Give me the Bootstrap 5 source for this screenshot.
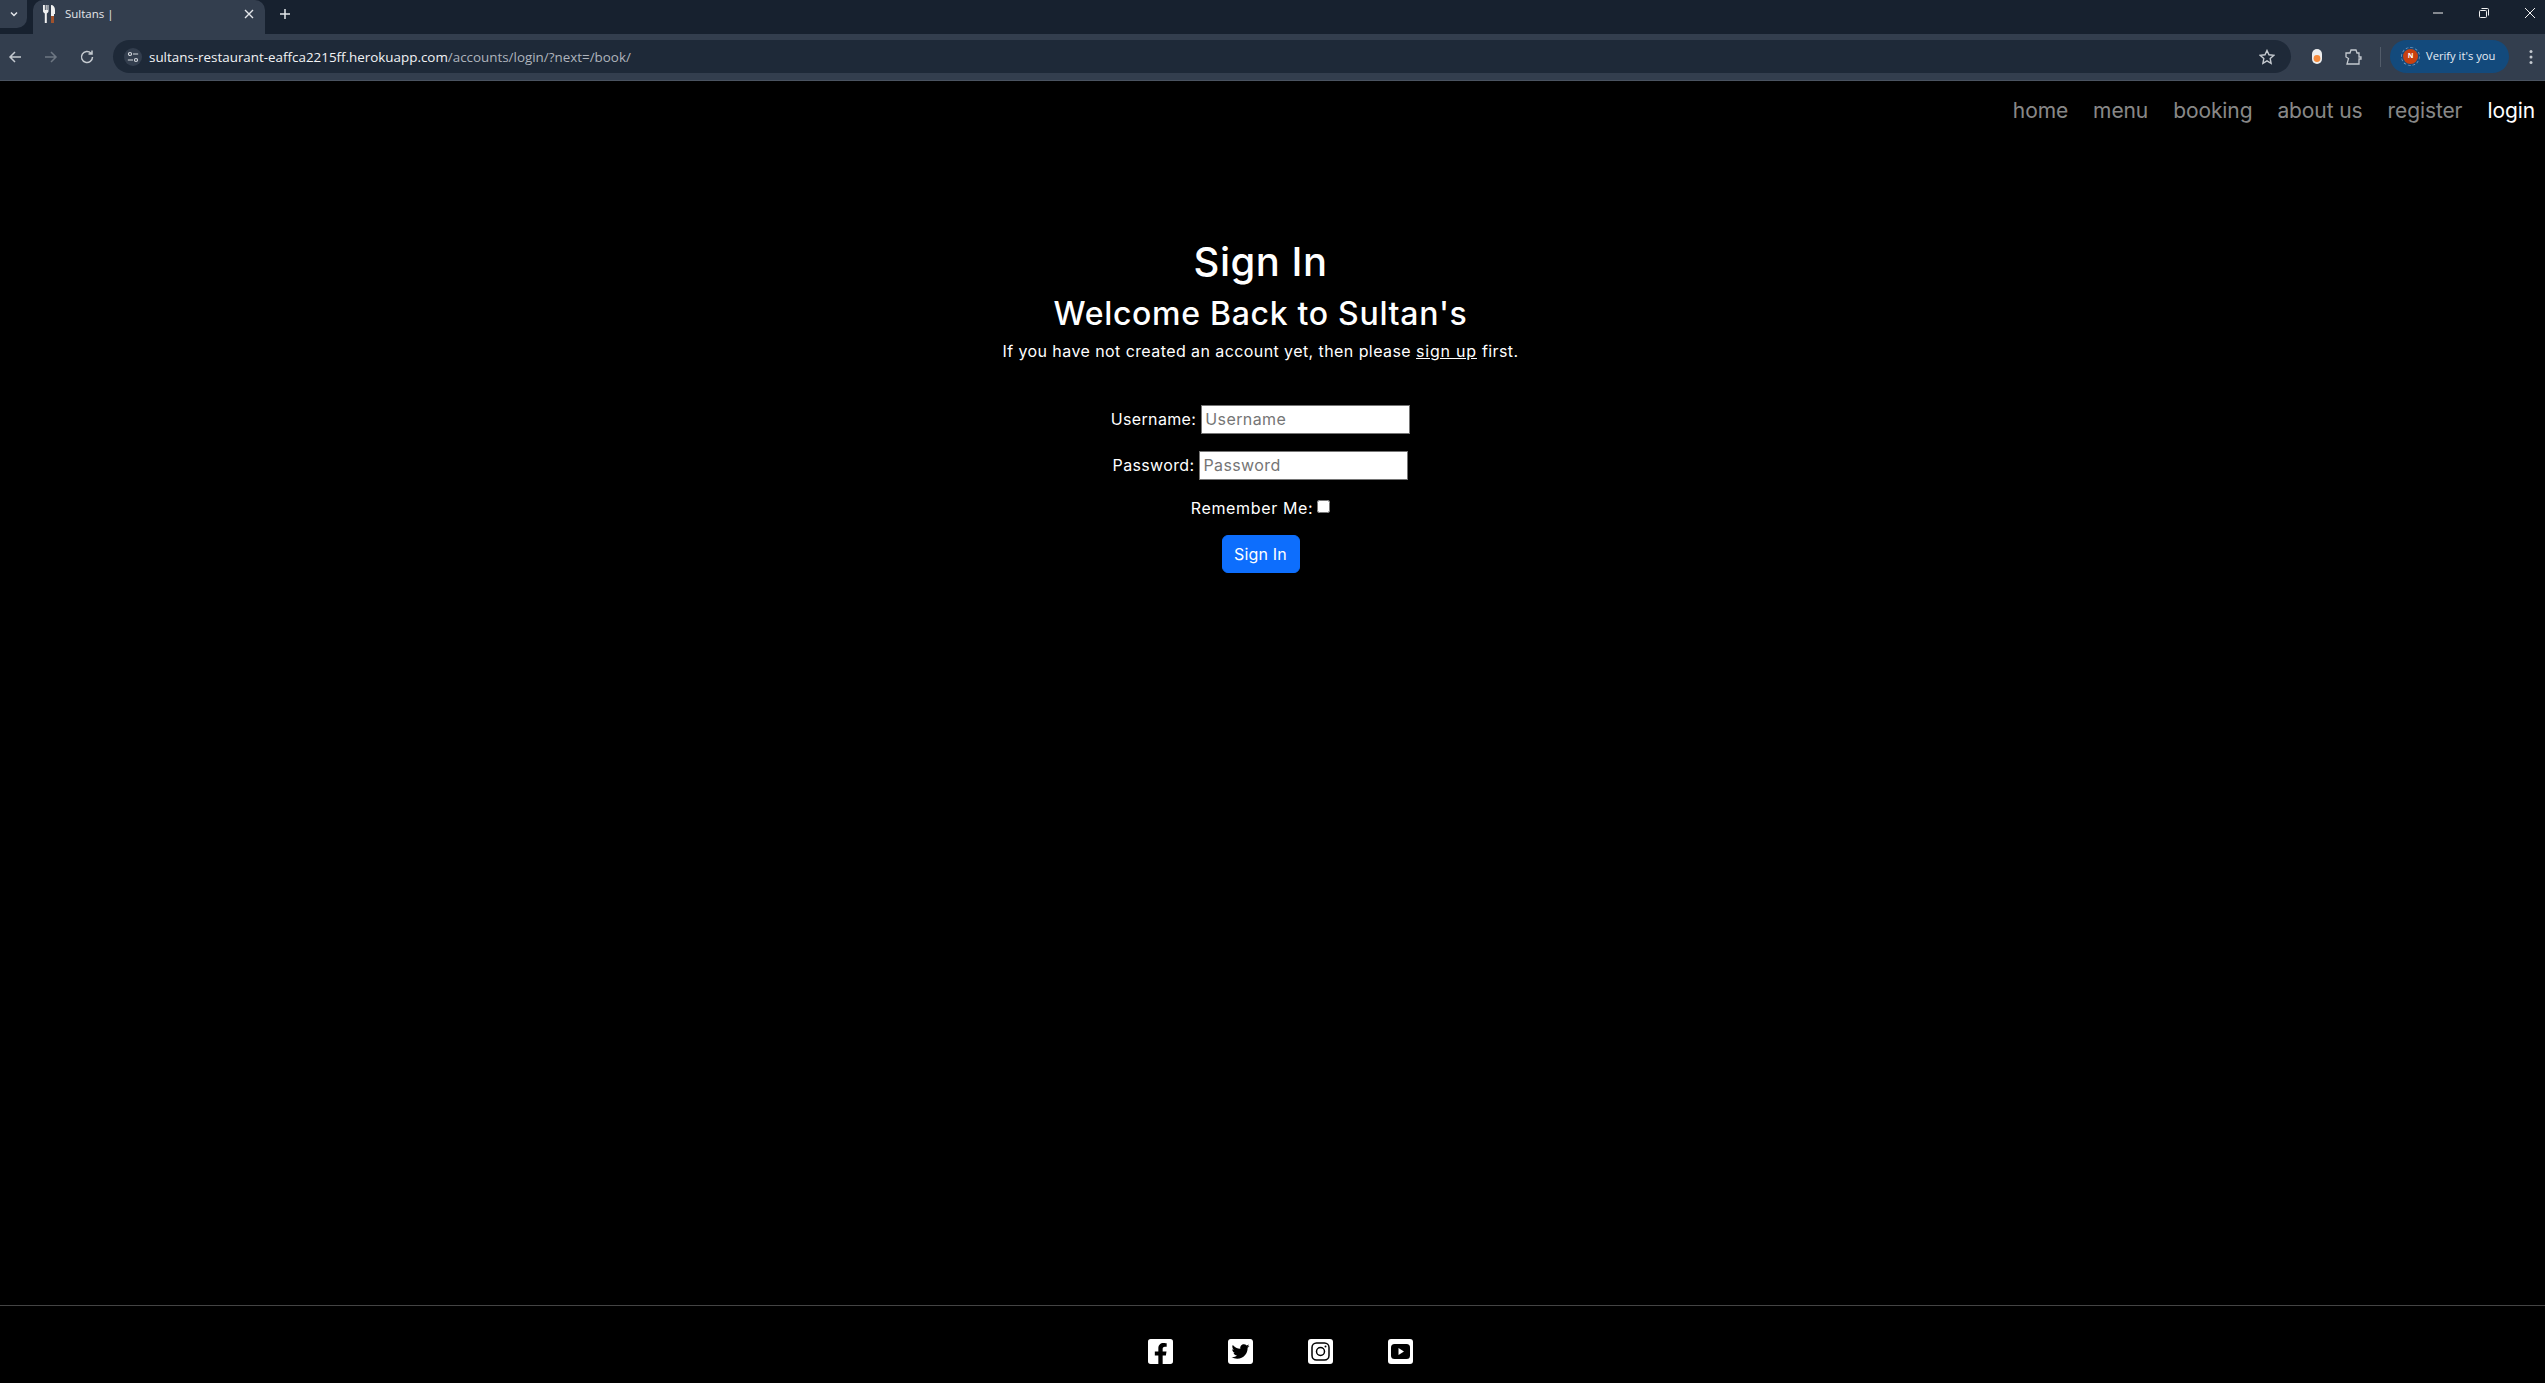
<!DOCTYPE html>
<html lang="en">
<head>
<meta charset="utf-8">
<title>Sultans |</title>
<link href="https://cdn.jsdelivr.net/npm/bootstrap@5.3.0/dist/css/bootstrap.min.css" rel="stylesheet">
<style>
html,body{height:100%;overflow:hidden}
body{background:#000;color:#fff;font-family:Inter,"Noto Sans",sans-serif;display:flex;flex-direction:column;height:1383px}
.tabstrip{height:34px;background:#17212f;color:#e3e6ea;font-family:"Open Sans","Noto Sans",sans-serif}
.tabdrop{width:27px;height:28px;background:#333e4e;border-radius:0 0 10px 0;margin-right:6px;flex-shrink:0}
.tabshape{width:232px;height:34px;background:#333e4e;border-radius:10px 10px 0 0;padding:0 11px 6px 10px;font-size:11.5px}
.tabname{margin-left:9px}
.tabplus{margin-left:14px;margin-top:8px}
.winctl{gap:30px;padding-right:7px;padding-top:7px}
.toolbar{height:47px;background:#333e4e;border-bottom:1px solid #4a5360;padding:6px 8px 7px 7px;font-family:"Open Sans","Noto Sans",sans-serif}
.navbtns{gap:20px;width:106px;flex-shrink:0}
.omni{height:33px;background:#1e2938;border-radius:17px;padding:0 16px 0 11px;font-size:13.4px;color:#aeb4bd;min-width:0}
.infochip{width:18px;height:18px;border-radius:50%;background:#333e4e;margin-right:7px}
.urlhost{color:#f2f3f5}
.urltext{padding-top:1px}
.extras{margin-left:21px;gap:23px;flex-shrink:0}
.sep{width:1px;height:20px;background:#525c6a;margin:0 9px 0 -5px}
.profile{height:33px;width:119px;flex-shrink:0;background:#134a7c;border-radius:17px;padding-left:13px;gap:8px;font-size:11.2px;color:#e6edf5}
.avatar{width:15px;height:15px;border-radius:50%;background:#c8400f;color:#fff;font-size:7px;font-weight:700;outline:1px dashed #6b95bd;outline-offset:1px;display:flex;align-items:center;justify-content:center}
.dotsgap{margin-left:16px;flex-shrink:0}
.sitenav{padding:13px 10px 0 0;height:46px}
.sitenav .navbar-nav{gap:25px}
.sitenav.navbar-expand .navbar-nav .nav-link{color:rgba(255,255,255,.55);font-size:21px;letter-spacing:-.1px;padding:0;line-height:30px}
.sitenav.navbar-expand .navbar-nav .nav-link.active{color:#fff}
.pagemain{flex:1 1 auto;padding-right:24px;text-align:center}
.title1{font-size:40px;font-weight:500;margin:0;padding-top:111px;line-height:48px;letter-spacing:.5px}
.title2{font-size:32px;font-weight:500;margin:9px 0 0;line-height:38px;letter-spacing:.7px}
.lede{font-size:16px;font-weight:400;margin:0 0 42px;line-height:24px;padding-top:6px;letter-spacing:.42px}
.lede a{color:#fff;letter-spacing:.8px}
.fieldrow{margin-bottom:17px;line-height:29px;height:29px;font-size:16px;font-weight:400;gap:5px;letter-spacing:.35px}
.fieldrow input{width:209px;height:29px;padding:1px 2px 1px 3px;border:1px solid #767676;border-radius:0;background:#fff;font-size:16px;font-weight:400;color:#000;letter-spacing:.4px}
.fieldrow input::placeholder{color:#757575}
.rememberrow{font-size:16px;font-weight:400;gap:4px;line-height:24px;margin-bottom:15px;margin-top:-1px;letter-spacing:.65px}
.rememberrow input{width:13px;height:13px;margin:0 0 4px 0}
.signbtn{font-size:16px;font-weight:400;letter-spacing:.2px;width:78px;padding-left:0;padding-right:0}
.sitefoot{height:78px;border-top:1px solid #444;padding-top:33px;gap:55px;padding-left:16px}
.sitefoot svg{width:25px;height:25px;display:block}
</style>
</head>
<body>
<header>
  <div class="tabstrip d-flex align-items-start">
    <div class="tabdrop d-flex align-items-center justify-content-center">
      <svg width="10" height="10" viewBox="0 0 10 10"><path d="M2 3.500l3 3 3-3" fill="none" stroke="#e3e6ea" stroke-width="1.500"/></svg>
    </div>
    <div class="tabshape d-flex align-items-center">
      <svg width="13" height="18" viewBox="0 0 13 18"><path d="M0 0v6c0 1.500 1 2 1.800 2.400V18h2V8.400C4.600 8 5.500 7.500 5.500 6V0h-1v5h-.8V0h-1v5h-.8V0z" fill="#f1f1f1"/><path d="M8 0c2.500 0 4 2 4 5v4H11v2H8z" fill="#f1f1f1"/><rect x="8" y="11" width="3" height="7" fill="#a0522d"/></svg>
      <span class="tabname flex-grow-1">Sultans |</span>
      <svg width="10" height="10" viewBox="0 0 10 10"><path d="M1 1l8 8M9 1l-8 8" stroke="#e3e6ea" stroke-width="1.400"/></svg>
    </div>
    <svg class="tabplus" width="12" height="12" viewBox="0 0 12 12"><path d="M6 1v10M1 6h10" stroke="#e3e6ea" stroke-width="1.500"/></svg>
    <div class="ms-auto d-flex align-items-center winctl">
      <svg width="16" height="12" viewBox="0 0 16 12"><path d="M3 6h10" stroke="#f1f1f1"/></svg>
      <svg width="16" height="12" viewBox="0 0 16 12"><rect x="3.500" y="3.500" width="7" height="7" rx="1" fill="none" stroke="#f1f1f1"/><path d="M5.500 1.500h6a1 1 0 0 1 1 1v6" fill="none" stroke="#f1f1f1"/></svg>
      <svg width="16" height="12" viewBox="0 0 16 12"><path d="M3 1l10 10M13 1L3 11" stroke="#f1f1f1"/></svg>
    </div>
  </div>
  <div class="toolbar d-flex align-items-center">
    <div class="d-flex align-items-center navbtns">
      <svg width="16" height="16" viewBox="0 0 16 16"><path d="M14 8H3M8 3L3 8l5 5" fill="none" stroke="#c5cad0" stroke-width="1.500"/></svg>
      <svg width="16" height="16" viewBox="0 0 16 16"><path d="M2 8h11M8 3l5 5-5 5" fill="none" stroke="#6e7783" stroke-width="1.500"/></svg>
      <svg width="16" height="16" viewBox="0 0 16 16"><path d="M13.500 8A5.500 5.500 0 1 1 12 4.200M13 1.500v3.500H9.500" fill="none" stroke="#c5cad0" stroke-width="1.500"/></svg>
    </div>
    <div class="omni flex-grow-1 d-flex align-items-center">
      <span class="infochip d-flex align-items-center justify-content-center">
        <svg width="12" height="12" viewBox="0 0 14 14"><g fill="none" stroke="#d5d9de" stroke-width="1.300"><circle cx="3.500" cy="3.500" r="1.800"/><path d="M7 3.500h6M1 10.500h6"/><circle cx="10.500" cy="10.500" r="1.800"/></g></svg>
      </span>
      <span class="flex-grow-1 urltext"><span class="urlhost">sultans-restaurant-eaffca2215ff.herokuapp.com</span>/accounts/login/?next=/book/</span>
      <svg width="16" height="16" viewBox="0 0 16 16"><path d="M8 1.500l2 4.300 4.700.6-3.500 3.200.9 4.700L8 11.900l-4.100 2.400.9-4.700L1.300 6.400 6 5.800z" fill="none" stroke="#c5cad0" stroke-width="1.400"/></svg>
    </div>
    <div class="d-flex align-items-center extras">
      <svg width="10" height="15" viewBox="0 0 10 15"><rect x="0" y="0" width="10" height="15" rx="5" fill="#eee"/><circle cx="5" cy="9.500" r="3.400" fill="#f58a3c"/></svg>
      <svg width="17" height="16" viewBox="0 0 17 16"><path d="M1 4h4l1-3h5l1 3h2v4h2v2h-2v5H2l1.500-5.500L1 8z" fill="none" stroke="#c5cad0" stroke-width="1.300"/></svg>
      <span class="sep"></span>
    </div>
    <div class="profile d-flex align-items-center">
      <span class="avatar">N</span>
      <span>Verify it's you</span>
    </div>
    <svg class="dotsgap" width="12" height="16" viewBox="0 0 4 16"><circle cx="2" cy="2.500" r="1.500" fill="#c5cad0"/><circle cx="2" cy="8" r="1.500" fill="#c5cad0"/><circle cx="2" cy="13.500" r="1.500" fill="#c5cad0"/></svg>
  </div>
</header>
<nav class="navbar navbar-expand sitenav justify-content-end">
  <ul class="navbar-nav">
    <li class="nav-item"><a class="nav-link" href="#">home</a></li>
    <li class="nav-item"><a class="nav-link" href="#">menu</a></li>
    <li class="nav-item"><a class="nav-link" href="#">booking</a></li>
    <li class="nav-item"><a class="nav-link" href="#">about us</a></li>
    <li class="nav-item"><a class="nav-link" href="#">register</a></li>
    <li class="nav-item"><a class="nav-link active" href="#">login</a></li>
  </ul>
</nav>
<main class="pagemain">
  <h1 class="title1">Sign In</h1>
  <h2 class="title2">Welcome Back to Sultan's</h2>
  <p class="lede">If you have not created an account yet, then please <a href="#">sign up</a> first.</p>
  <form>
    <div class="fieldrow d-flex justify-content-center align-items-center"><label for="u">Username:</label><input id="u" type="text" placeholder="Username"></div>
    <div class="fieldrow d-flex justify-content-center align-items-center"><label for="p">Password:</label><input id="p" type="password" placeholder="Password"></div>
    <div class="rememberrow d-flex justify-content-center align-items-center"><label for="r">Remember Me:</label><input id="r" type="checkbox"></div>
    <button type="button" class="btn btn-primary signbtn">Sign In</button>
  </form>
</main>
<footer class="sitefoot d-flex justify-content-center">
  <svg viewBox="0 32 448 448"><path fill="#fff" d="M400 32H48A48 48 0 0 0 0 80v352a48 48 0 0 0 48 48h137.250V327.690h-63V256h63v-54.640c0-62.150 37-96.480 93.670-96.480 27.140 0 55.520 4.840 55.520 4.840v61h-31.270c-30.810 0-40.420 19.120-40.420 38.730V256h68.780l-11 71.690h-57.780V480H400a48 48 0 0 0 48-48V80a48 48 0 0 0-48-48z"/></svg>
  <svg viewBox="0 32 448 448"><path fill="#fff" d="M400 32H48C21.500 32 0 53.500 0 80v352c0 26.500 21.500 48 48 48h352c26.500 0 48-21.500 48-48V80c0-26.500-21.500-48-48-48zm-48.900 158.800c.2 2.800.2 5.700.2 8.500 0 86.700-66 186.600-186.600 186.600-37.200 0-71.700-10.800-100.700-29.400 5.300.6 10.400.8 15.800.8 30.700 0 58.900-10.400 81.400-28-28.800-.6-53-19.500-61.300-45.500 10.100 1.500 19.200 1.500 29.600-1.200-30-6.100-52.500-32.500-52.500-64.400v-.8c8.700 4.900 18.900 7.900 29.600 8.300a65.447 65.447 0 0 1-29.200-54.600c0-12.200 3.200-23.400 8.900-33.100 32.300 39.800 80.800 65.800 135.200 68.600-9.300-44.500 24-80.600 64-80.600 18.900 0 35.900 7.900 47.900 20.700 14.800-2.800 29-8.300 41.600-15.800-4.900 15.200-15.200 28-28.800 36.100 13.200-1.400 26-5.100 37.800-10.200-8.900 13.100-20.100 24.700-32.900 34z"/></svg>
  <svg viewBox="0 0 25 25"><rect width="25" height="25" rx="3" fill="#fff"/><rect x="4" y="4" width="17" height="17" rx="4.500" fill="none" stroke="#000" stroke-width="1.500"/><circle cx="12.500" cy="12.500" r="4" fill="none" stroke="#000" stroke-width="1.500"/><circle cx="17.500" cy="7.500" r="1" fill="#000"/></svg>
  <svg viewBox="0 0 25 25"><rect width="25" height="25" rx="3" fill="#fff"/><rect x="3" y="5" width="19" height="15" rx="3.500" fill="#000"/><path d="M10.500 9l5.500 3.500-5.500 3.500z" fill="#fff"/></svg>
</footer>
<script src="https://cdn.jsdelivr.net/npm/bootstrap@5.3.0/dist/js/bootstrap.bundle.min.js"></script>
</body>
</html>
